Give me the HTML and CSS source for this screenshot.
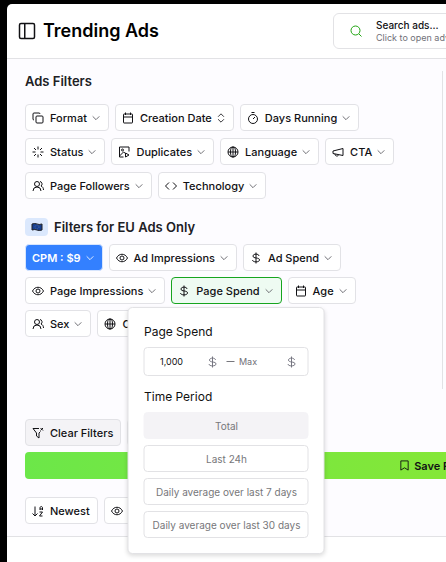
FILE: index.html
```html
<!DOCTYPE html>
<html lang="en">
<head>
<meta charset="utf-8">
<title>Trending Ads</title>
<link rel="stylesheet" href="styles.css">
</head>
<body>
<svg class="sprite" aria-hidden="true">
  <symbol id="chevron" viewBox="0 0 24 24"><path d="m4 8 8 8 8-8"/></symbol>
  <symbol id="copy" viewBox="0 0 24 24"><rect x="8" y="8" width="14" height="14" rx="2"/><path d="M4 16a2 2 0 0 1-2-2V4a2 2 0 0 1 2-2h10a2 2 0 0 1 2 2"/></symbol>
  <symbol id="calendar" viewBox="0 0 24 24"><path d="M7 1v5M17 1v5M3 10h18"/><rect x="3" y="4" width="18" height="18" rx="1"/></symbol>
  <symbol id="sort" viewBox="0 0 24 24"><path d="m5 9 7-7 7 7M5 15l7 7 7-7"/></symbol>
  <symbol id="timer" viewBox="0 0 24 24"><path d="M9 1h6M12 14l4-4"/><circle cx="12" cy="14" r="9"/></symbol>
  <symbol id="loader" viewBox="0 0 24 24"><path d="M12 1v6M12 17v6M1 12h6M17 12h6M4 4l4 4M16 16l4 4M4 20l4-4M16 8l4-4"/></symbol>
  <symbol id="media" viewBox="0 0 24 24"><path d="M11 22H3V2h19v9M3 20l8-8 3 2"/><circle cx="9" cy="8" r="2"/><path d="m15 14 7 4-7 4z"/></symbol>
  <symbol id="globe" viewBox="0 0 24 24"><circle cx="12" cy="12" r="10"/><ellipse cx="12" cy="12" rx="5" ry="10"/><path d="M2 12h20M12 2v20"/></symbol>
  <symbol id="megaphone" viewBox="0 0 24 24"><path d="m2 10 20-5v14L2 15zM6 16c0 5 6 5 7 2"/></symbol>
  <symbol id="users" viewBox="0 0 24 24"><circle cx="10" cy="8" r="5"/><path d="M2 22a8 8 0 0 1 16 0M16 3a5 5 0 0 1 2 9c3 1 5 4 5 8"/></symbol>
  <symbol id="code" viewBox="0 0 24 24"><path d="m8 5-7 7 7 7M16 5l7 7-7 7"/></symbol>
  <symbol id="eye" viewBox="0 0 24 24"><path d="M1 12c5-10 17-10 22 0-5 10-17 10-22 0z"/><circle cx="12" cy="12" r="4"/></symbol>
  <symbol id="dollar" viewBox="0 0 24 24"><path d="M12 1v22M18 8c0-5-12-5-12 0 0 6 13 2 13 8 0 5-14 5-14 0"/></symbol>
  <symbol id="clear" viewBox="0 0 24 24"><path d="M14 3H2l7 9v6l5 4V12l3-3M17 2l5 5M22 2l-5 5"/></symbol>
  <symbol id="sort-az" viewBox="0 0 24 24"><path d="m1 17 5 5 5-5M6 22V3M16 10V6c0-4 5-4 5 0v4M16 8h5M15 14h6l-6 8h6"/></symbol>
  <symbol id="bookmark" viewBox="0 0 24 24"><path d="M4 2h16v20l-8-5-8 5z"/></symbol>
  <symbol id="search" viewBox="0 0 24 24"><circle cx="11" cy="11" r="9"/><path d="m18 18 5 5"/></symbol>
  <symbol id="panel" viewBox="0 0 24 24"><rect x="2" y="2" width="20" height="20" rx="2"/><path d="M9 2v20"/></symbol>
</svg>
<div class="app">
  <header class="topbar">
    <button class="toggle" aria-label="Toggle sidebar"><svg><use href="#panel"/></svg></button>
    <h1>Trending Ads</h1>
    <button class="search">
      <svg><use href="#search"/></svg>
      <span class="search-text"><strong>Search ads...</strong><small>Click to open advanced search</small></span>
    </button>
  </header>
  <main class="filters">
    <div class="groups">
      <section class="group">
        <h2>Ads Filters</h2>
        <div class="rows">
          <div class="row">
            <button class="pill"><svg class="icon"><use href="#copy"/></svg>Format<svg class="chev"><use href="#chevron"/></svg></button>
            <button class="pill"><svg class="icon"><use href="#calendar"/></svg>Creation Date<svg class="chev dark"><use href="#sort"/></svg></button>
            <button class="pill"><svg class="icon"><use href="#timer"/></svg>Days Running<svg class="chev"><use href="#chevron"/></svg></button>
          </div>
          <div class="row">
            <button class="pill"><svg class="icon"><use href="#loader"/></svg>Status<svg class="chev"><use href="#chevron"/></svg></button>
            <button class="pill"><svg class="icon"><use href="#media"/></svg>Duplicates<svg class="chev"><use href="#chevron"/></svg></button>
            <button class="pill"><svg class="icon"><use href="#globe"/></svg>Language<svg class="chev"><use href="#chevron"/></svg></button>
            <button class="pill"><svg class="icon"><use href="#megaphone"/></svg>CTA<svg class="chev"><use href="#chevron"/></svg></button>
          </div>
          <div class="row">
            <button class="pill"><svg class="icon"><use href="#users"/></svg>Page Followers<svg class="chev"><use href="#chevron"/></svg></button>
            <button class="pill"><svg class="icon"><use href="#code"/></svg>Technology<svg class="chev"><use href="#chevron"/></svg></button>
          </div>
        </div>
      </section>
      <section class="group eu">
        <h2><span class="flag"><svg viewBox="0 0 12 8"><path fill="#173f91" d="M1 1q3-1 5 0t5 0v6q-3 1-5 0T1 7z"/><circle cx="6" cy="4" r="2" fill="none" stroke="#53699a" stroke-dasharray="1 1"/></svg></span>Filters for EU Ads Only</h2>
        <div class="rows tight">
          <div class="row">
            <button class="pill primary">CPM : $9<svg class="chev"><use href="#chevron"/></svg></button>
            <button class="pill"><svg class="icon"><use href="#eye"/></svg>Ad Impressions<svg class="chev"><use href="#chevron"/></svg></button>
            <button class="pill"><svg class="icon"><use href="#dollar"/></svg>Ad Spend<svg class="chev"><use href="#chevron"/></svg></button>
          </div>
          <div class="row">
            <button class="pill"><svg class="icon"><use href="#eye"/></svg>Page Impressions<svg class="chev"><use href="#chevron"/></svg></button>
            <div class="anchor">
              <button class="pill active" aria-expanded="true"><svg class="icon"><use href="#dollar"/></svg>Page Spend<svg class="chev"><use href="#chevron"/></svg></button>
              <div class="popover">
                <h3>Page Spend</h3>
                <div class="range">
                  <input type="text" value="1,000" aria-label="Minimum page spend"><svg><use href="#dollar"/></svg>
                  <span class="dash"></span>
                  <input type="text" placeholder="Max" aria-label="Maximum page spend"><svg><use href="#dollar"/></svg>
                </div>
                <h3>Time Period</h3>
                <div class="periods">
                  <button class="selected">Total</button>
                  <button>Last 24h</button>
                  <button>Daily average over last 7 days</button>
                  <button>Daily average over last 30 days</button>
                </div>
              </div>
            </div>
            <button class="pill"><svg class="icon"><use href="#calendar"/></svg>Age<svg class="chev"><use href="#chevron"/></svg></button>
          </div>
          <div class="row">
            <button class="pill"><svg class="icon"><use href="#users"/></svg>Sex<svg class="chev"><use href="#chevron"/></svg></button>
            <button class="pill"><svg class="icon"><use href="#globe"/></svg>Country<svg class="chev"><use href="#chevron"/></svg></button>
          </div>
        </div>
      </section>
    </div>
    <div class="row actions">
      <button class="pill muted"><svg class="icon"><use href="#clear"/></svg>Clear Filters</button>
      <button class="pill muted">Presets</button>
    </div>
    <button class="save"><svg><use href="#bookmark"/></svg>Save Filters</button>
    <div class="row sorting">
      <button class="pill"><svg class="icon"><use href="#sort-az"/></svg>Newest</button>
      <button class="pill"><svg class="icon"><use href="#eye"/></svg>Views</button>
    </div>
  </main>
</div>
</body>
</html>
```

FILE: styles.css
```css
* { box-sizing: border-box; }
body {
  margin: 0;
  background: #000;
  color: #111114;
  font-family: Inter, "Liberation Sans", sans-serif;
  font-size: 11px;
  overflow: hidden;
}
button, input { font: inherit; color: inherit; margin: 0; }
h1, h2, h3 { margin: 0; }
svg { fill: none; stroke: currentColor; stroke-width: 2; flex: none; }
.sprite { position: absolute; width: 0; height: 0; }
.app {
  margin: 4px 0 0 7px;
  min-height: calc(100vh - 4px);
  background: #fff;
  border-top-left-radius: 5px;
  overflow: hidden;
}
.topbar {
  display: flex;
  align-items: center;
  height: 55px;
  padding-left: 11px;
  border-bottom: 1px solid #e2e2e5;
}
.toggle { display: flex; padding: 0; border: 0; background: none; }
.toggle svg { width: 18px; height: 18px; }
h1 { margin-left: 7px; font-size: 18px; line-height: 24px; font-weight: 600; color: #000; white-space: nowrap; }
.search {
  display: flex;
  align-items: center;
  gap: 14px;
  flex: none;
  width: 260px;
  height: 36px;
  margin-left: auto;
  margin-right: -147px;
  padding: 0 16px;
  border: 1px solid #e2e2e5;
  border-radius: 6px;
  background: #fff;
  text-align: left;
  white-space: nowrap;
}
.search svg { width: 12px; height: 12px; color: #1fa511; }
.search-text { display: flex; flex-direction: column; }
.search strong { font-size: 10px; line-height: 14px; font-weight: 500; }
.search small { font-size: 9px; line-height: 12px; color: #707078; }
.filters {
  padding: 12px 0 12px 18px;
  background: #fdfcff;
  border-bottom: 1px solid #e2e2e5;
}
.groups { height: 318px; margin-right: 3px; border-right: 1px solid #e2e2e5; }
h2 { display: flex; align-items: center; gap: 6px; font-size: 13px; line-height: 20px; font-weight: 600; color: #202024; }
.rows { display: flex; flex-direction: column; gap: 7px; margin-top: 13px; }
.rows.tight { gap: 6px; margin-top: 7px; }
.eu { margin-top: 18px; }
.flag { display: flex; align-items: center; justify-content: center; width: 23px; height: 18px; border-radius: 4px; background: #dbe8fd; }
.flag svg { width: 12px; height: 8px; stroke-width: 1; }
.row { display: flex; gap: 6px; }
.pill {
  display: flex;
  align-items: center;
  gap: 6px;
  flex: none;
  height: 27px;
  padding: 0 7px 0 6px;
  border: 1px solid #e2e2e6;
  border-radius: 4px;
  background: #fff;
  font-weight: 500;
  white-space: nowrap;
}
.icon { width: 12px; height: 12px; }
.chev { width: 10px; height: 10px; margin-left: -2px; color: #55555c; }
.chev.dark { color: #111114; }
.primary { background: #3380ff; border-color: #d7e5fd; color: #fff; font-weight: 600; }
.primary .chev { color: #fff; }
.active { background: #eefbf2; border-color: #17a51f; }
.muted { background: #f4f3f6; }
.anchor { position: relative; }
.popover {
  position: absolute;
  z-index: 1;
  top: calc(100% + 3px);
  left: 50%;
  transform: translateX(-50%);
  width: 197px;
  padding: 15px;
  border: 1px solid #e2e2e5;
  border-radius: 5px;
  background: #fff;
  box-shadow: 0 2px 4px #0002;
}
h3 { font-size: 12px; line-height: 18px; font-weight: 400; color: #111; }
.range {
  display: flex;
  align-items: center;
  height: 29px;
  margin: 6px 0 12px;
  padding: 0 10px 0 15px;
  border: 1px solid #e2e2e5;
  border-radius: 4px;
}
.range input { flex: 1; min-width: 0; padding: 0; border: 0; background: none; outline: 0; font-size: 9px; }
.range input::placeholder { color: #707078; opacity: 1; }
.range svg { width: 12px; height: 12px; color: #777782; }
.dash { width: 8px; height: 1px; margin: 0 4px 0 8px; background: #77777d; }
.periods { display: flex; flex-direction: column; gap: 6px; margin-top: 6px; }
.periods button {
  height: 27px;
  padding: 0;
  border: 1px solid #e2e2e5;
  border-radius: 4px;
  background: #fff;
  color: #77777a;
  font-size: 10px;
  white-space: nowrap;
}
.periods .selected { background: #f4f3f6; border-color: #f4f3f6; }
.actions { margin-top: 30px; }
.save {
  display: flex;
  align-items: center;
  justify-content: center;
  gap: 4px;
  width: 196%;
  height: 27px;
  margin-top: 6px;
  padding: 0;
  border: 0;
  border-radius: 4px;
  background: linear-gradient(90deg, #6ce749, #84e738 50%, #9ae728);
  font-weight: 600;
}
.save svg { width: 11px; height: 11px; }
.sorting { margin-top: 18px; }
```
